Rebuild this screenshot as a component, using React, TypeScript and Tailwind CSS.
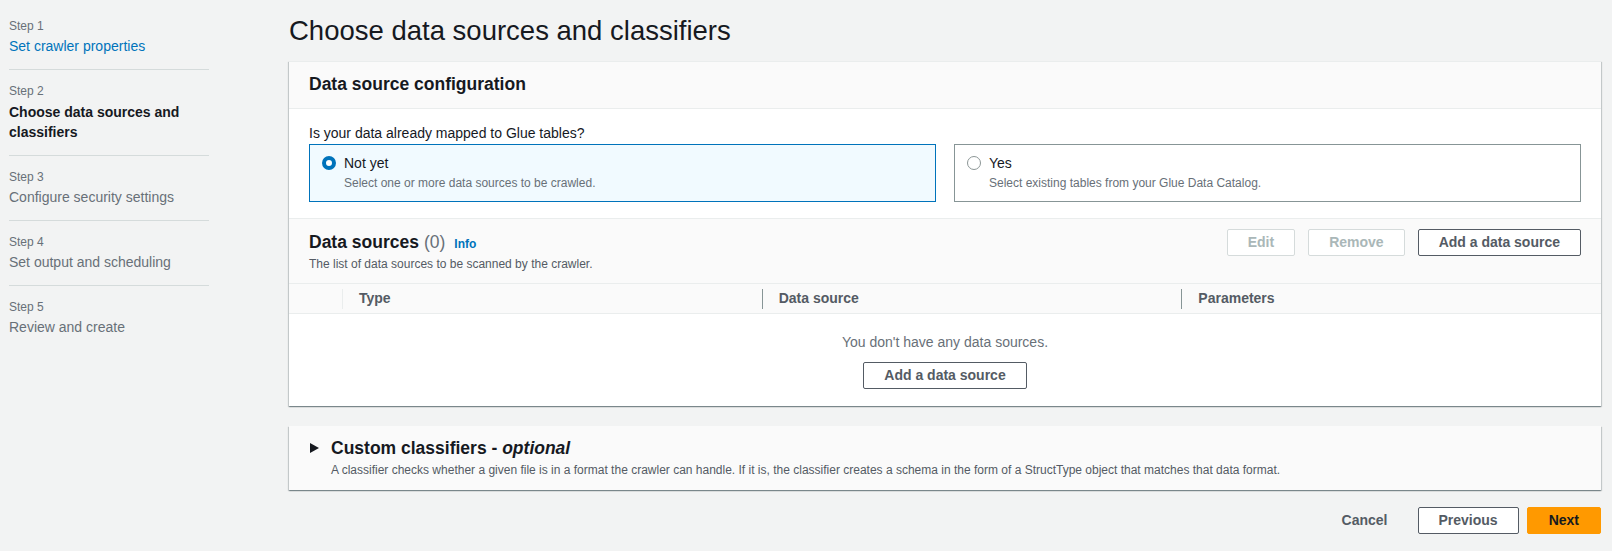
// LIBS
import React from "react";

// DATA
const steps = [
  { label: "Step 1", title: "Set crawler properties", state: "done" },
  { label: "Step 2", title: "Choose data sources and classifiers", state: "active" },
  { label: "Step 3", title: "Configure security settings", state: "todo" },
  { label: "Step 4", title: "Set output and scheduling", state: "todo" },
  { label: "Step 5", title: "Review and create", state: "todo" },
];

const panelShadow =
  "shadow-[0_1px_1px_0_rgba(0,28,36,0.3),1px_1px_1px_0_rgba(0,28,36,0.15),-1px_1px_1px_0_rgba(0,28,36,0.15)]";

// COMP
const Sidebar = () => {
  return (
    <nav className="w-[289px] shrink-0 pl-[9px] pt-[5px]">
      <ol className="w-[200px]">
        {steps.map((step, i) => (
          <li
            key={step.label}
            className={
              i < steps.length - 1
                ? "border-b border-[#d5dbdb] py-[13px]"
                : "py-[13px]"
            }
          >
            <div className="text-[12px] leading-4 text-[#687078]">{step.label}</div>
            <div
              className={
                step.state === "done"
                  ? "mt-[2px] text-[14px] leading-5 text-[#0073bb]"
                  : step.state === "active"
                    ? "mt-[3px] text-[14px] font-bold leading-5 text-[#16191f]"
                    : "mt-[2px] text-[14px] leading-5 text-[#687078]"
              }
            >
              {step.title}
            </div>
          </li>
        ))}
      </ol>
    </nav>
  );
};

const RadioTile = ({
  checked,
  title,
  description,
}: {
  checked?: boolean;
  title: string;
  description: string;
}) => {
  return (
    <div
      className={
        checked
          ? "flex gap-2 border border-[#0073bb] bg-[#f1faff] pb-[10px] pl-3 pt-2"
          : "flex gap-2 border border-[#879596] bg-white pb-[10px] pl-3 pt-2"
      }
    >
      <span
        className={
          checked
            ? "mt-[3px] h-[14px] w-[14px] shrink-0 rounded-full border-[4px] border-[#0073bb] bg-white"
            : "mt-[3px] h-[14px] w-[14px] shrink-0 rounded-full border-[1.5px] border-[#8c9696] bg-white"
        }
      />
      <div>
        <div className="text-[14px] leading-5 text-[#16191f]">{title}</div>
        <div className="mt-[2px] text-[12px] leading-4 text-[#687078]">{description}</div>
      </div>
    </div>
  );
};

const Button = ({
  children,
  disabled,
  className,
}: {
  children: React.ReactNode;
  disabled?: boolean;
  className?: string;
}) => {
  return (
    <button
      className={
        (disabled
          ? "border-[#d5dbdb] text-[#aab7b8] "
          : "border-[#545b64] text-[#545b64] ") +
        "flex h-[27px] items-center justify-center rounded-[2px] border bg-white px-5 text-[14px] font-bold " +
        (className ?? "")
      }
    >
      {children}
    </button>
  );
};

const DataSourcePanel = () => {
  return (
    <section className={"border-t border-[#eaeded] bg-white " + panelShadow}>
      <div className="border-b border-[#eaeded] bg-[#fafafa] px-5 pb-[13px] pt-[11px]">
        <h2 className="text-[17.5px] font-bold leading-[22px] text-[#16191f]">
          Data source configuration
        </h2>
      </div>

      <div className="px-5 pb-4 pt-[13px]">
        <div className="text-[14px] leading-[22px] text-[#16191f]">
          Is your data already mapped to Glue tables?
        </div>
        <div className="grid grid-cols-2 gap-[18px]">
          <RadioTile checked title="Not yet" description="Select one or more data sources to be crawled." />
          <RadioTile title="Yes" description="Select existing tables from your Glue Data Catalog." />
        </div>
      </div>

      <div className="flex items-start justify-between border-t border-[#eaeded] bg-[#fafafa] px-5 pb-[11px] pt-3">
        <div>
          <div className="flex items-baseline">
            <h2 className="text-[17.5px] font-bold leading-[22px] text-[#16191f]">Data sources</h2>
            <span className="ml-[5px] text-[17.5px] leading-[22px] text-[#687078]">(0)</span>
            <a className="ml-[9px] text-[12px] font-bold text-[#0073bb]">Info</a>
          </div>
          <p className="mt-[3px] text-[12px] leading-4 text-[#545b64]">
            The list of data sources to be scanned by the crawler.
          </p>
        </div>
        <div className="-mt-[2px] flex gap-[13px]">
          <Button disabled>Edit</Button>
          <Button disabled>Remove</Button>
          <Button>Add a data source</Button>
        </div>
      </div>

      <div className="grid h-[31px] grid-cols-[53px_1fr_1fr_1fr] border-y border-[#eaeded] bg-[#fafafa] text-[14px] font-bold text-[#545b64]">
        <div />
        <div className="flex items-center">
          <span className="h-5 w-px bg-[#eaeded]" />
          <span className="ml-4">Type</span>
        </div>
        <div className="flex items-center">
          <span className="h-5 w-px bg-[#879596]" />
          <span className="ml-4">Data source</span>
        </div>
        <div className="flex items-center">
          <span className="h-5 w-px bg-[#879596]" />
          <span className="ml-4">Parameters</span>
        </div>
      </div>

      <div className="flex flex-col items-center pb-[17px] pt-[18px]">
        <p className="text-[14px] leading-5 text-[#687078]">You don't have any data sources.</p>
        <Button className="mt-[10px]">Add a data source</Button>
      </div>
    </section>
  );
};

const ClassifiersPanel = () => {
  return (
    <section className={"mt-5 flex gap-[12px] bg-[#fafafa] pb-3 pl-[21px] pr-5 pt-[11px] " + panelShadow}>
      <svg width="9" height="10" viewBox="0 0 9 10" className="mt-[6px] shrink-0">
        <polygon points="0,0 9,5 0,10" fill="#16191f" />
      </svg>
      <div>
        <h2 className="text-[17.5px] font-bold leading-[22px] text-[#16191f]">
          Custom classifiers - <i>optional</i>
        </h2>
        <p className="mt-[3px] text-[12px] leading-4 text-[#545b64]">
          A classifier checks whether a given file is in a format the crawler can handle. If it is, the
          classifier creates a schema in the form of a StructType object that matches that data format.
        </p>
      </div>
    </section>
  );
};

const App = () => {
  return (
    <div className="flex min-h-screen bg-[#f2f3f3] font-['Liberation_Sans',Arial,sans-serif] text-[#16191f]">
      <Sidebar />
      <main className="min-w-0 flex-1 pr-[11px] pt-[13px]">
        <h1 className="mb-3 text-[27.5px] font-normal leading-9 text-[#16191f]">
          Choose data sources and classifiers
        </h1>
        <DataSourcePanel />
        <ClassifiersPanel />
        <div className="mt-[17px] flex items-center justify-end gap-2">
          <button className="h-[27px] px-[22px] text-[14px] font-bold text-[#545b64]">Cancel</button>
          <Button>Previous</Button>
          <button className="flex h-[27px] items-center rounded-[2px] border border-[#ff9900] bg-[#ff9900] px-[21px] text-[14px] font-bold text-[#16191f]">
            Next
          </button>
        </div>
      </main>
    </div>
  );
};

export default App;
